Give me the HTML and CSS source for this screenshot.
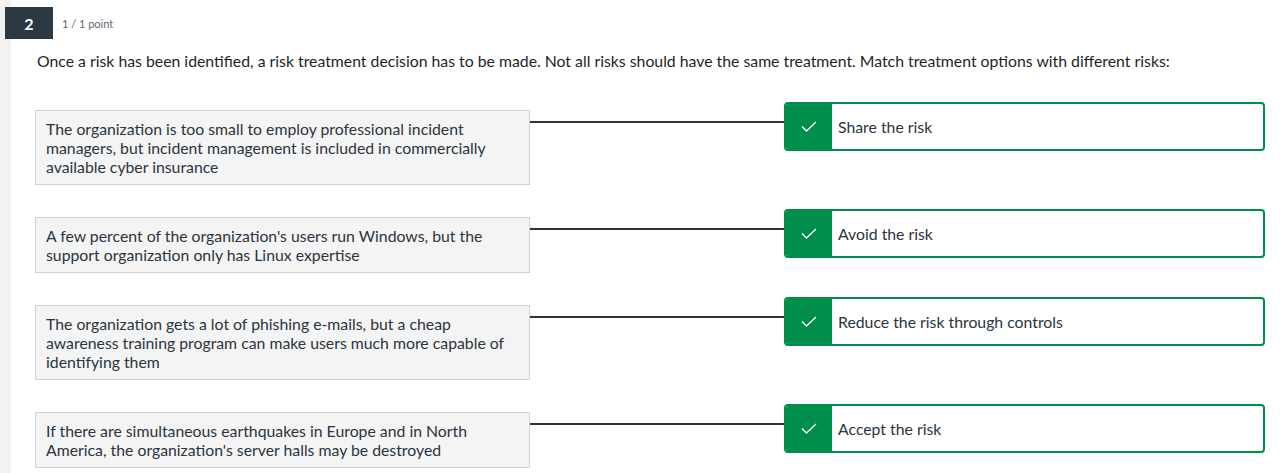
FILE: index.html
```html
<!DOCTYPE html>
<html lang="en">
<head>
<meta charset="utf-8">
<title>Quiz question</title>
<link rel="stylesheet" href="styles.css">
</head>
<body>
<div class="header">
  <div class="badge">2</div>
  <div class="points">1 / 1 point</div>
</div>
<p class="question">Once a risk has been identified, a risk treatment decision has to be made. Not all risks should have the same treatment. Match treatment options with different risks:</p>
<div class="rows">
  <div class="row">
    <div class="prompt">The organization is too small to employ professional incident managers, but incident management is included in commercially available cyber insurance</div>
    <div class="link"></div>
    <div class="answer">
      <div class="check"><svg width="16" height="11" viewBox="0 0 16 11"><path d="M1 5.5 L5.5 10 L15 1" fill="none" stroke="#fff" stroke-width="1.3"/></svg></div>
      <div class="label">Share the risk</div>
    </div>
  </div>
  <div class="row">
    <div class="prompt">A few percent of the organization's users run Windows, but the support organization only has Linux expertise</div>
    <div class="link"></div>
    <div class="answer">
      <div class="check"><svg width="16" height="11" viewBox="0 0 16 11"><path d="M1 5.5 L5.5 10 L15 1" fill="none" stroke="#fff" stroke-width="1.3"/></svg></div>
      <div class="label">Avoid the risk</div>
    </div>
  </div>
  <div class="row">
    <div class="prompt">The organization gets a lot of phishing e-mails, but a cheap awareness training program can make users much more capable of identifying them</div>
    <div class="link"></div>
    <div class="answer">
      <div class="check"><svg width="16" height="11" viewBox="0 0 16 11"><path d="M1 5.5 L5.5 10 L15 1" fill="none" stroke="#fff" stroke-width="1.3"/></svg></div>
      <div class="label">Reduce the risk through controls</div>
    </div>
  </div>
  <div class="row">
    <div class="prompt">If there are simultaneous earthquakes in Europe and in North America, the organization's server halls may be destroyed</div>
    <div class="link"></div>
    <div class="answer">
      <div class="check"><svg width="16" height="11" viewBox="0 0 16 11"><path d="M1 5.5 L5.5 10 L15 1" fill="none" stroke="#fff" stroke-width="1.3"/></svg></div>
      <div class="label">Accept the risk</div>
    </div>
  </div>
</div>
</body>
</html>
```
FILE: styles.css
```css
html, body {
  margin: 0;
  padding: 0;
}
body {
  font-family: Lato, "Open Sans", sans-serif;
  color: #1f1f1f;
  background: linear-gradient(to right, #f2f2f2 0, #f2f2f2 11px, #ffffff 11px);
  min-height: 473px;
}
.header {
  display: flex;
  align-items: center;
  padding: 7px 0 0 5px;
}
.badge {
  width: 48px;
  height: 32px;
  background: #2a3943;
  color: #ffffff;
  font-size: 16px;
  font-weight: 700;
  display: flex;
  align-items: center;
  justify-content: center;
}
.points {
  margin-left: 9px;
  font-size: 11px;
  color: #5b6670;
}
.question {
  margin: 12px 0 0 37px;
  font-size: 15.8px;
  line-height: 20px;
  color: #1f1f1f;
}
.rows {
  margin-top: 31px;
  padding: 0 16px 0 35px;
  display: flex;
  flex-direction: column;
  gap: 24px;
}
.row {
  display: flex;
  align-items: flex-start;
}
.prompt {
  box-sizing: border-box;
  width: 495px;
  flex: none;
  margin-top: 8px;
  padding: 8px 10px 8px 10px;
  background: #f4f4f4;
  border: 1px solid #cdd3d9;
  font-size: 15.8px;
  line-height: 19px;
  color: #2a3540;
}
.link {
  flex: 1;
  height: 2px;
  margin-top: 19px;
  background: #2a3540;
}
.answer {
  box-sizing: border-box;
  width: 481px;
  height: 49px;
  flex: none;
  display: flex;
  align-items: stretch;
  border: 2px solid #008e4c;
  border-radius: 4px;
  overflow: hidden;
}
.check {
  width: 46px;
  background: #008e4c;
  display: flex;
  align-items: center;
  justify-content: center;
}
.label {
  display: flex;
  align-items: center;
  padding-left: 6px;
  font-size: 15.8px;
  color: #2a3540;
}
```
